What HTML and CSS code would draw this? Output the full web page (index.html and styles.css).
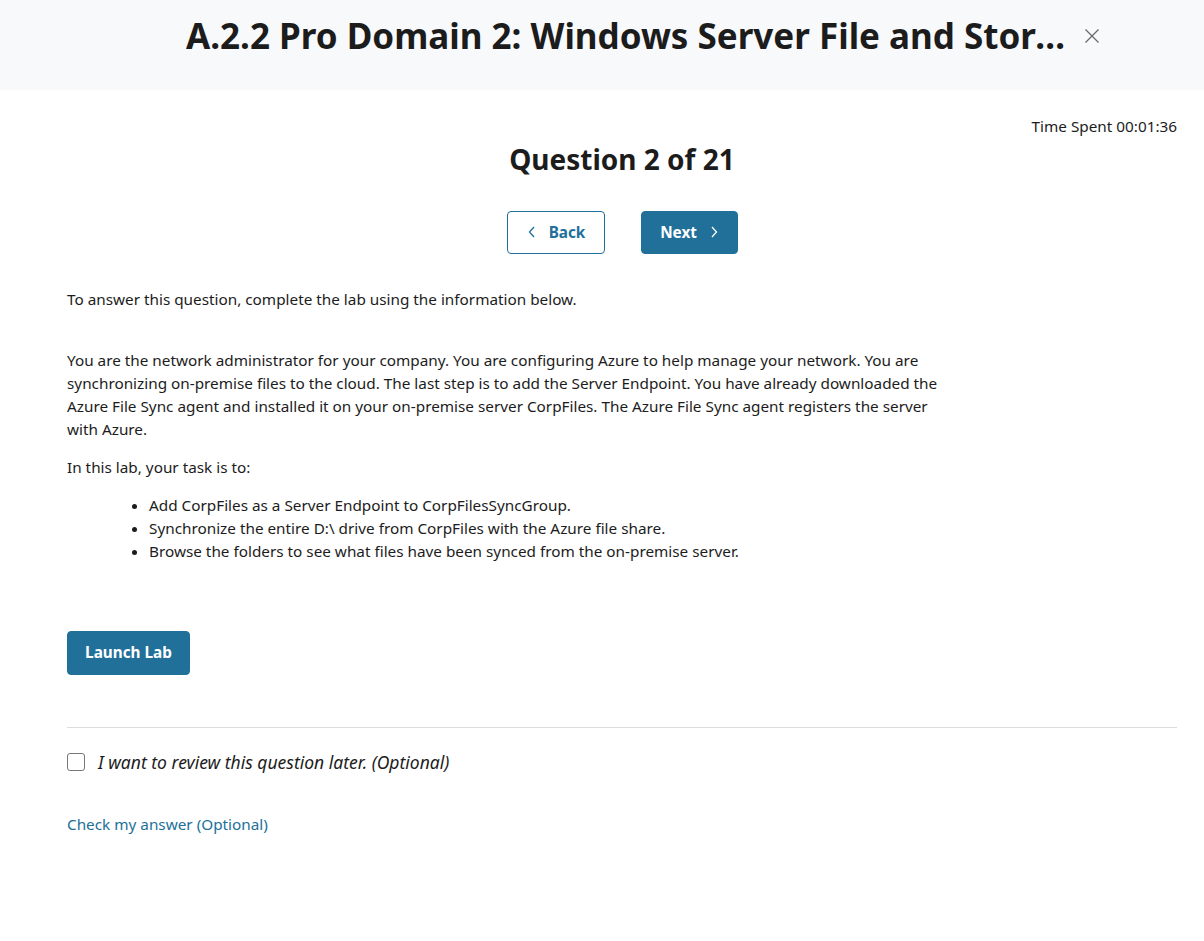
FILE: index.html
```html
<!DOCTYPE html>
<html>
<head>
<meta charset="utf-8">
<link rel="stylesheet" href="styles.css">
</head>
<body>
<header class="topbar">
  <h1 class="title">A.2.2 Pro Domain 2: Windows Server File and Storage Services</h1>
  <button class="close" aria-label="Close">
    <svg width="16" height="16" viewBox="0 0 16 16"><path d="M1.5 1.5 L14.5 14.5 M14.5 1.5 L1.5 14.5" stroke="#6b6b6b" stroke-width="1.3" fill="none"/></svg>
  </button>
</header>
<main class="content">
  <div class="timer">Time Spent 00:01:36</div>
  <h2 class="qtitle">Question 2 of 21</h2>
  <div class="nav">
    <button class="btn btn-outline">
      <svg width="8" height="12" viewBox="0 0 8 12"><path d="M6 1 L1.5 6 L6 11" stroke="currentColor" stroke-width="1.3" fill="none"/></svg>
      <span>Back</span>
    </button>
    <button class="btn btn-primary">
      <span>Next</span>
      <svg width="8" height="12" viewBox="0 0 8 12"><path d="M2 1 L6.5 6 L2 11" stroke="currentColor" stroke-width="1.3" fill="none"/></svg>
    </button>
  </div>
  <p class="intro">To answer this question, complete the lab using the information below.</p>
  <div class="body">
    <p>You are the network administrator for your company. You are configuring Azure to help manage your network. You are synchronizing on-premise files to the cloud. The last step is to add the Server Endpoint. You have already downloaded the Azure File Sync agent and installed it on your on-premise server CorpFiles. The Azure File Sync agent registers the server with Azure.</p>
    <p>In this lab, your task is to:</p>
    <ul>
      <li>Add CorpFiles as a Server Endpoint to CorpFilesSyncGroup.</li>
      <li>Synchronize the entire D:\ drive from CorpFiles with the Azure file share.</li>
      <li>Browse the folders to see what files have been synced from the on-premise server.</li>
    </ul>
  </div>
  <button class="btn btn-primary launch">Launch Lab</button>
  <hr class="divider">
  <label class="review">
    <span class="checkbox"></span>
    <span class="review-text">I want to review this question later. (Optional)</span>
  </label>
  <a class="check" href="#">Check my answer (Optional)</a>
</main>
</body>
</html>
```
FILE: styles.css
```css
* { box-sizing: border-box; }
html, body { margin: 0; padding: 0; }
body {
  font-family: "Noto Sans", "Open Sans", sans-serif;
  color: #1c1c1c;
  background: #fff;
  font-size: 15.3px;
}
.topbar {
  height: 90px;
  background: #f8f9fb;
  display: flex;
  align-items: center;
  justify-content: center;
  gap: 18px;
  padding: 0 0 20px 82px;
}
.title {
  margin: 0;
  font-size: 35px;
  font-stretch: 87.5%;
  font-weight: 700;
  color: #1c1c1c;
  max-width: 880px;
  white-space: nowrap;
  overflow: hidden;
  text-overflow: ellipsis;
}
.close {
  background: none;
  border: 0;
  padding: 0;
  width: 16px;
  height: 16px;
  display: flex;
  align-items: center;
  justify-content: center;
  margin-top: 2px;
}
.content {
  padding: 26px 27px 40px 67px;
  display: flex;
  flex-direction: column;
}
.timer {
  align-self: flex-end;
  font-size: 15.3px;
  color: #1c1c1c;
  line-height: 20px;
}
.qtitle {
  margin: 3px 0 0;
  text-align: center;
  font-size: 28px;
  font-weight: 700;
  line-height: 40px;
}
.nav {
  display: flex;
  justify-content: center;
  gap: 36px;
  margin-top: 32px;
}
.btn {
  font-family: inherit;
  font-size: 15.3px;
  font-weight: 700;
  height: 43px;
  border-radius: 4px;
  display: inline-flex;
  align-items: center;
  justify-content: center;
  gap: 13px;
  cursor: pointer;
  padding-bottom: 3px;
}
.btn-outline {
  width: 98px;
  background: #fff;
  color: #21709a;
  border: 1px solid #21709a;
  padding-right: 4px;
}
.btn-primary {
  width: 97px;
  background: #21709a;
  color: #fff;
  border: 1px solid #21709a;
}
.intro {
  margin: 34px 0 0;
  line-height: 23px;
}
.body {
  max-width: 880px;
  margin-top: 38px;
  line-height: 23px;
}
.body p { margin: 0 0 15px; }
.body ul {
  margin: 0;
  padding-left: 82px;
}
.launch {
  align-self: flex-start;
  width: 123px;
  height: 44px;
  margin-top: 68px;
}
.divider {
  width: 100%;
  border: 0;
  border-top: 1px solid #dcdcdc;
  margin: 52px 0 0;
}
.review {
  display: flex;
  align-items: center;
  gap: 13px;
  margin-top: 22px;
  font-size: 17.5px;
  font-style: italic;
}
.checkbox {
  width: 18px;
  height: 18px;
  border: 1.5px solid #777;
  border-radius: 3px;
  display: inline-block;
}
.check {
  margin-top: 39px;
  color: #21709a;
  text-decoration: none;
  line-height: 23px;
  align-self: flex-start;
}
```
